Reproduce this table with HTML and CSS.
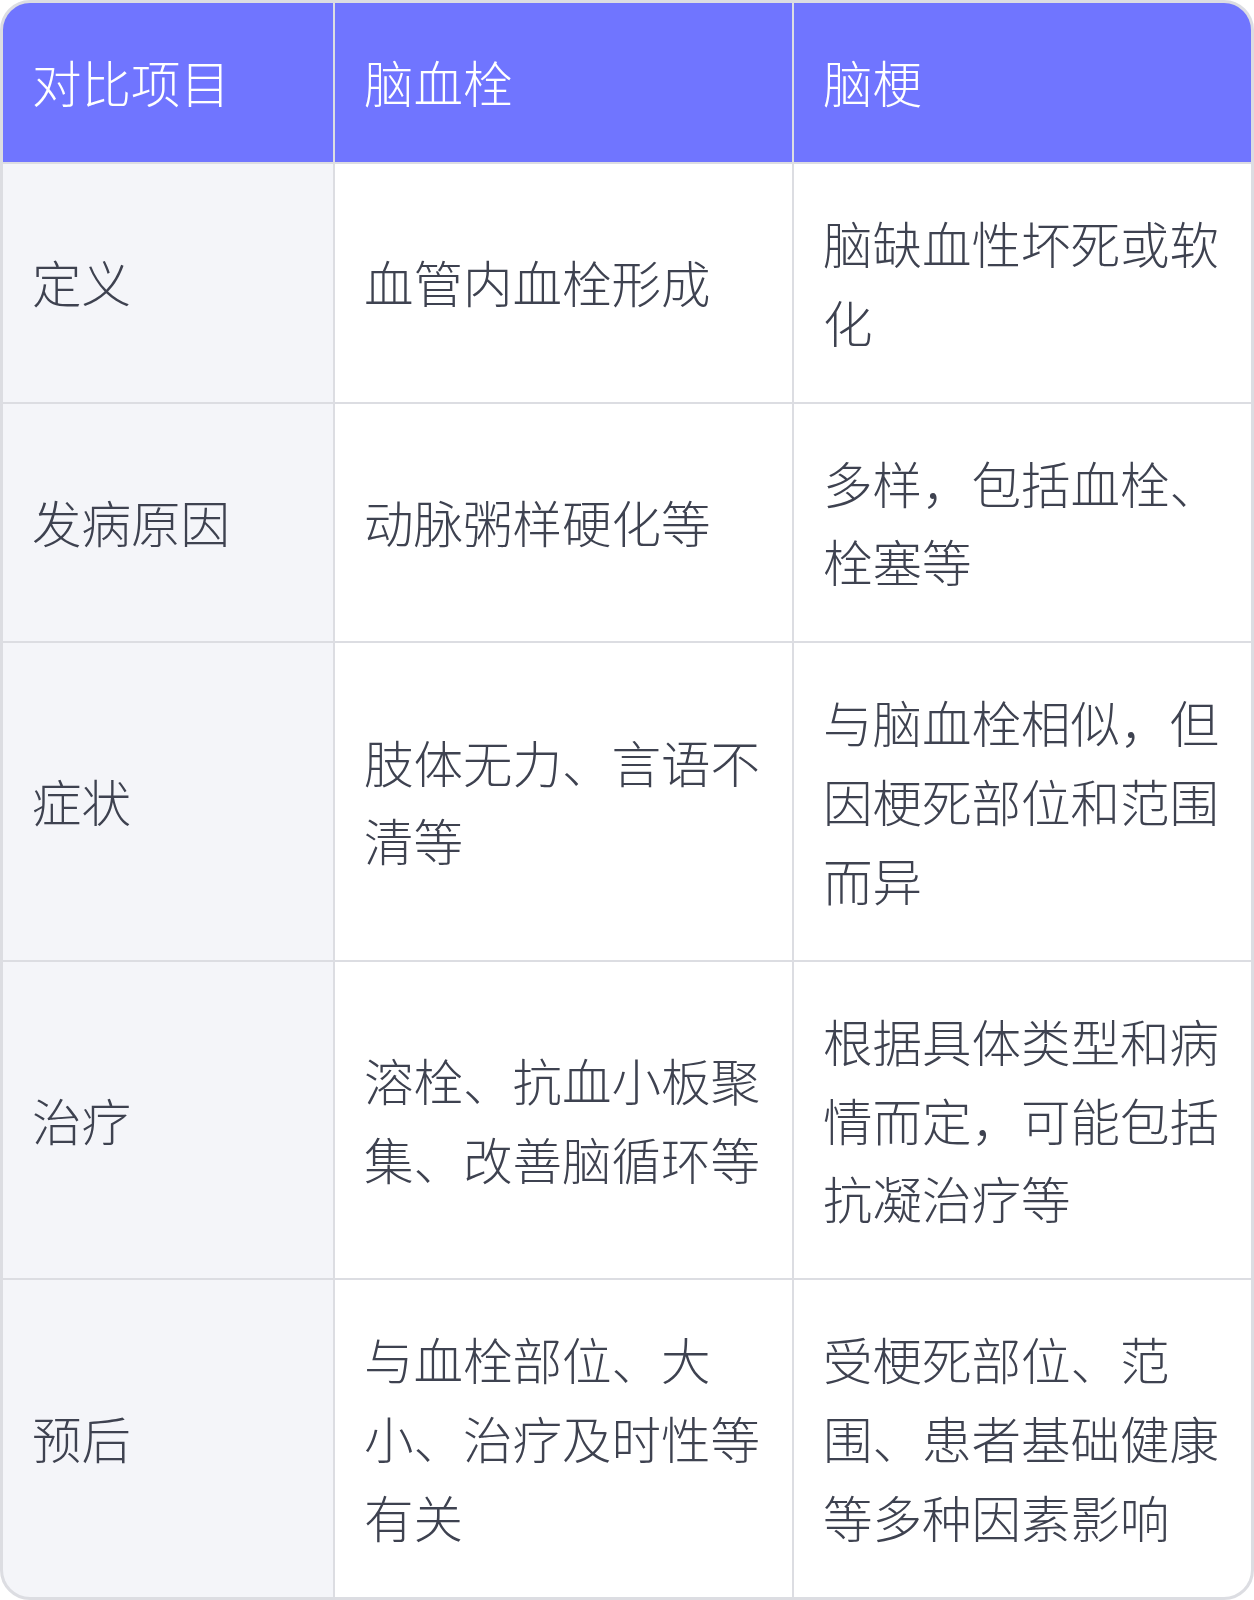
FILE: index.html
```html
<!DOCTYPE html>
<html lang="zh-CN">
<head>
<meta charset="utf-8">
<title>脑血栓与脑梗对比</title>
<link rel="stylesheet" href="styles.css">
</head>
<body>
<div class="table">
  <div class="cell head">对比项目</div>
  <div class="cell head">脑血栓</div>
  <div class="cell head">脑梗</div>

  <div class="cell label">定义</div>
  <div class="cell">血管内血栓形成</div>
  <div class="cell">脑缺血性坏死或软化</div>

  <div class="cell label">发病原因</div>
  <div class="cell">动脉粥样硬化等</div>
  <div class="cell">多样，包括血栓、栓塞等</div>

  <div class="cell label">症状</div>
  <div class="cell">肢体无力、言语不清等</div>
  <div class="cell">与脑血栓相似，但因梗死部位和范围而异</div>

  <div class="cell label">治疗</div>
  <div class="cell">溶栓、抗血小板聚集、改善脑循环等</div>
  <div class="cell">根据具体类型和病情而定，可能包括抗凝治疗等</div>

  <div class="cell label">预后</div>
  <div class="cell">与血栓部位、大小、治疗及时性等有关</div>
  <div class="cell">受梗死部位、范围、患者基础健康等多种因素影响</div>
</div>
</body>
</html>
```

FILE: styles.css
```css
html, body {
  margin: 0;
  padding: 0;
  background: #ffffff;
}

.table {
  display: grid;
  grid-template-columns: 330px 457px 457px;
  gap: 2px;
  width: 1254px;
  box-sizing: border-box;
  background: #dcdde2;
  border: 3px solid #dcdde2;
  border-radius: 30px;
  overflow: hidden;
  font-family: "Noto Sans CJK SC", "Noto Sans", sans-serif;
  font-size: 49.5px;
  font-weight: 300;
  line-height: 78.85px;
  color: #3e4250;
}

.cell {
  display: flex;
  align-items: center;
  padding: 40px 29px;
  background: #ffffff;
}

.cell.head {
  background: #7075ff;
  color: #ffffff;
}

.cell.label {
  background: #f4f5f9;
}
```
